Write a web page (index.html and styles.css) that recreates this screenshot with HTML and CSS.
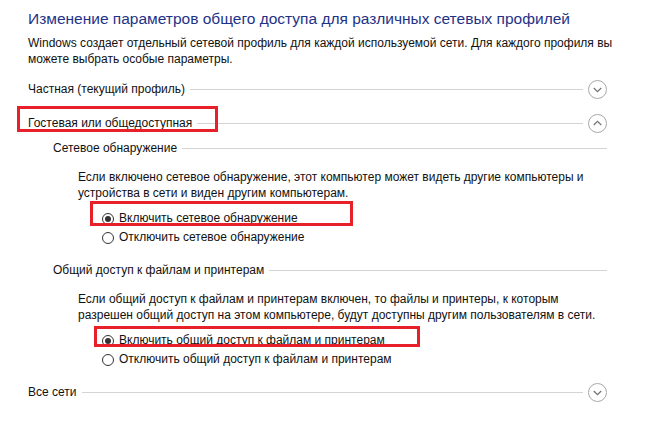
FILE: index.html
```html
<!DOCTYPE html>
<html lang="ru">
<head>
<meta charset="utf-8">
<title>Дополнительные параметры общего доступа</title>
<link rel="stylesheet" href="styles.css">
</head>
<body>
<div class="page">
  <h1 class="title">Изменение параметров общего доступа для различных сетевых профилей</h1>
  <p class="intro">Windows создает отдельный сетевой профиль для каждой используемой сети. Для каждого профиля вы<br>можете выбрать особые параметры.</p>

  <div class="profile profile-first">
    <span class="profile-name">Частная (текущий профиль)</span>
    <span class="rule"></span>
    <span class="chevron"><svg viewBox="0 0 19 19" width="19" height="19"><circle cx="9.5" cy="9.5" r="9" fill="none" stroke="#a8a8a8" stroke-width="1"/><path d="M5.8 8 L9.5 11.6 L13.2 8" fill="none" stroke="#747474" stroke-width="1.3"/></svg></span>
  </div>

  <div class="profile profile-open">
    <span class="mark mark-profile"></span>
    <span class="profile-name">Гостевая или общедоступная</span>
    <span class="rule"></span>
    <span class="chevron"><svg viewBox="0 0 19 19" width="19" height="19"><circle cx="9.5" cy="9.5" r="9" fill="none" stroke="#a8a8a8" stroke-width="1"/><path d="M5.8 11 L9.5 7.4 L13.2 11" fill="none" stroke="#747474" stroke-width="1.3"/></svg></span>
  </div>

  <section class="group group-discovery">
    <div class="group-head">
      <span class="group-name">Сетевое обнаружение</span>
      <span class="rule"></span>
    </div>
    <p class="group-text">Если включено сетевое обнаружение, этот компьютер может видеть другие компьютеры и<br>устройства в сети и виден другим компьютерам.</p>
    <div class="options">
      <label class="option">
        <span class="mark mark-opt1"></span>
        <span class="radio checked"></span>
        <span>Включить сетевое обнаружение</span>
      </label>
      <label class="option">
        <span class="radio"></span>
        <span>Отключить сетевое обнаружение</span>
      </label>
    </div>
  </section>

  <section class="group group-sharing">
    <div class="group-head">
      <span class="group-name">Общий доступ к файлам и принтерам</span>
      <span class="rule"></span>
    </div>
    <p class="group-text">Если общий доступ к файлам и принтерам включен, то файлы и принтеры, к которым<br>разрешен общий доступ на этом компьютере, будут доступны другим пользователям в сети.</p>
    <div class="options">
      <label class="option">
        <span class="mark mark-opt2"></span>
        <span class="radio checked"></span>
        <span>Включить общий доступ к файлам и принтерам</span>
      </label>
      <label class="option">
        <span class="radio"></span>
        <span>Отключить общий доступ к файлам и принтерам</span>
      </label>
    </div>
  </section>

  <div class="profile profile-all">
    <span class="profile-name">Все сети</span>
    <span class="rule"></span>
    <span class="chevron"><svg viewBox="0 0 19 19" width="19" height="19"><circle cx="9.5" cy="9.5" r="9" fill="none" stroke="#a8a8a8" stroke-width="1"/><path d="M5.8 8 L9.5 11.6 L13.2 8" fill="none" stroke="#747474" stroke-width="1.3"/></svg></span>
  </div>
</div>
</body>
</html>
```

FILE: styles.css
```css
html, body {
  margin: 0;
  padding: 0;
  background: #ffffff;
}

body {
  font-family: "Liberation Sans", Arial, sans-serif;
  font-size: 12px;
  line-height: 16px;
  color: #111111;
}

.page {
  padding: 9px 56px 0 28px;
}

.title {
  margin: 0;
  font-size: 15.5px;
  line-height: 20px;
  font-weight: normal;
  color: #1e3287;
  white-space: nowrap;
}

.intro {
  margin: 6px 0 0;
  white-space: nowrap;
}

.profile {
  position: relative;
  display: flex;
  align-items: center;
  height: 20px;
  line-height: 20px;
}

.profile-first { margin-top: 12px; }
.profile-open { margin-top: 14px; }
.profile-all { margin-top: 13px; }

.profile-name {
  white-space: nowrap;
}

.rule {
  flex: 1;
  height: 0;
  border-top: 1px solid #d4d4d4;
  margin-left: 5px;
}

.profile .rule {
  margin-right: 5px;
}

.chevron {
  display: flex;
  width: 19px;
  height: 19px;
}

.group {
  padding-left: 25px;
}

.group-discovery { margin-top: 7px; }
.group-sharing { margin-top: 15px; }

.group-head {
  display: flex;
  align-items: center;
  height: 16px;
}

.group-name {
  white-space: nowrap;
}

.group-text {
  margin: 13px 0 0 25px;
  white-space: nowrap;
}

.options {
  margin: 8px 0 0 49px;
}

.option {
  position: relative;
  display: flex;
  align-items: center;
  height: 19px;
  line-height: 19px;
  gap: 5px;
}

.radio {
  box-sizing: border-box;
  width: 12px;
  height: 12px;
  border: 1px solid #333333;
  border-radius: 50%;
  display: flex;
  align-items: center;
  justify-content: center;
  background: #ffffff;
}

.radio.checked::after {
  content: "";
  width: 6px;
  height: 6px;
  border-radius: 50%;
  background: #333333;
}

/* red annotation frames drawn over the screenshot */
.mark {
  position: absolute;
  box-sizing: border-box;
  border: 3px solid #e8202a;
  pointer-events: none;
}

.mark-profile {
  left: -11px;
  top: -7px;
  width: 201px;
  height: 26px;
}

.mark-opt1 {
  left: -12px;
  top: -8px;
  width: 263px;
  height: 25px;
}

.mark-opt2 {
  left: -8px;
  top: -5px;
  width: 326px;
  height: 21px;
}
```
